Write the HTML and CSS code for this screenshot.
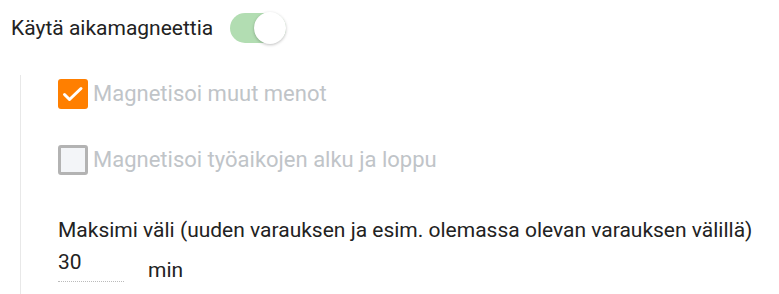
FILE: index.html
```html
<!DOCTYPE html>
<html lang="fi">
<head>
<meta charset="utf-8">
<link rel="stylesheet" href="styles.css">
</head>
<body>
<div class="main-row">
  <span class="main-label">Käytä aikamagneettia</span>
  <span class="switch"><span class="knob"></span></span>
</div>
<div class="section">
  <div class="check-row">
    <span class="box checked">
      <svg width="30" height="30" viewBox="0 0 30 30"><path d="M6.5 15.5 L11.5 20.5 L23 9.5" fill="none" stroke="#fff" stroke-width="3" stroke-linecap="round" stroke-linejoin="round"/></svg>
    </span>
    <span class="check-label">Magnetisoi muut menot</span>
  </div>
  <div class="check-row">
    <span class="box"></span>
    <span class="check-label">Magnetisoi työaikojen alku ja loppu</span>
  </div>
  <div class="field">
    <div class="field-label">Maksimi väli (uuden varauksen ja esim. olemassa olevan varauksen välillä)</div>
    <div class="field-row">
      <span class="input">30</span>
      <span class="unit">min</span>
    </div>
  </div>
</div>
</body>
</html>
```
FILE: styles.css
```css
html, body {
  margin: 0;
  padding: 0;
  background: #fff;
}
body {
  font-family: Roboto, "Liberation Sans", sans-serif;
  color: #222;
  width: 779px;
  height: 294px;
  overflow: hidden;
}
.main-row {
  display: flex;
  align-items: center;
  padding: 12px 0 0 11px;
  height: 32px;
}
.main-label {
  font-size: 21px;
}
.switch {
  position: relative;
  margin-left: 17px;
  width: 56px;
  height: 30px;
  border-radius: 15px;
  background: #b2ddb2;
}
.knob {
  position: absolute;
  right: 0;
  top: -1px;
  width: 32px;
  height: 32px;
  border-radius: 50%;
  background: #fff;
  box-shadow: 0 1px 3px rgba(0,0,0,0.25);
}
.section {
  margin: 31px 0 0 20px;
  border-left: 1px solid #e8e8e8;
  padding: 4px 0 0 37px;
  height: 215px;
}
.check-row {
  display: flex;
  align-items: center;
  height: 30px;
  margin-bottom: 36px;
}
.box {
  box-sizing: border-box;
  width: 30px;
  height: 30px;
  border-radius: 3px;
  border: 3px solid #b3b3b3;
  background: #f3f5f8;
  display: flex;
  align-items: center;
  justify-content: center;
}
.box.checked {
  border: none;
  background: #ff7f00;
}
.check-label {
  margin-left: 5px;
  margin-bottom: 2px;
  font-size: 22px;
  color: #c0c4c8;
}
.field {
  margin-top: 42px;
}
.field-label {
  font-size: 21px;
  line-height: 26px;
}
.field-row {
  display: flex;
  align-items: flex-start;
  margin-top: 4px;
}
.input {
  width: 66px;
  font-size: 21px;
  line-height: 30px;
  padding-bottom: 4px;
  border-bottom: 1px dotted #bbb;
}
.unit {
  margin-left: 24px;
  margin-top: 8px;
  font-size: 21px;
  line-height: 30px;
}
```
